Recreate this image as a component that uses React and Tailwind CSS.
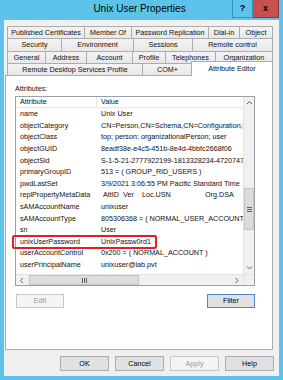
import React from "react";

const tabRows = [
  [
    ["Published Certificates", 78],
    ["Member Of", 47],
    ["Password Replication", 77],
    ["Dial-in", 31],
    ["Object", 33],
  ],
  [
    ["Security", 55],
    ["Environment", 72],
    ["Sessions", 59],
    ["Remote control", 80],
  ],
  [
    ["General", 39],
    ["Address", 41],
    ["Account", 46],
    ["Profile", 33],
    ["Telephones", 50],
    ["Organization", 57],
  ],
];

const attrs = [
  ["name", "Unix User"],
  ["objectCategory", "CN=Person,CN=Schema,CN=Configuration,DC=lab,DC=pvt"],
  ["objectClass", "top; person; organizationalPerson; user"],
  ["objectGUID", "8eadf38e-e4c5-451b-8e4d-4bbfc2668f06"],
  ["objectSid", "S-1-5-21-2777922199-1813328234-4720747100-1105"],
  ["primaryGroupID", "513 = ( GROUP_RID_USERS )"],
  ["pwdLastSet", "3/9/2021 3:06:55 PM Pacific Standard Time"],
  ["replPropertyMetaData", null],
  ["sAMAccountName", "unixuser"],
  ["sAMAccountType", "805306368 = ( NORMAL_USER_ACCOUNT )"],
  ["sn", "User"],
  ["unixUserPassword", "UnixPassw0rd1"],
  ["userAccountControl", "0x200 = ( NORMAL_ACCOUNT )"],
  ["userPrincipalName", "unixuser@lab.pvt"],
];

function Chevron({ dir }) {
  const d = {
    up: "M1 4 L3.5 1.5 L6 4",
    down: "M1 1.5 L3.5 4 L6 1.5",
    left: "M4 1 L1.5 3.5 L4 6",
    right: "M1.5 1 L4 3.5 L1.5 6",
  }[dir];
  const w = dir === "up" || dir === "down" ? 7 : 5.5;
  const h = dir === "up" || dir === "down" ? 5.5 : 7;
  return (
    <svg width={w} height={h} viewBox={`0 0 ${w} ${h}`}>
      <path d={d} fill="none" stroke="#606060" strokeWidth="1" />
    </svg>
  );
}

function Grip({ vertical }) {
  return (
    <div className={vertical ? "flex flex-col gap-[1px]" : "flex gap-[1px]"}>
      {[0, 1, 2].map((i) => (
        <div key={i} className={vertical ? "w-[5px] h-px bg-[#606060]" : "w-px h-[5px] bg-[#606060]"} />
      ))}
    </div>
  );
}

function Button({ label, disabled, isDefault, className = "" }) {
  const look = disabled
    ? "bg-[#f4f4f4] border-[#c8c8c8] text-[#9a9a9a]"
    : isDefault
    ? "bg-[#e1e1e1] border-[#4f88bd] text-black"
    : "bg-[#e1e1e1] border-[#adadad] text-black";
  return (
    <div className={`flex items-center justify-center border ${look} ${className}`}>{label}</div>
  );
}

export default function App() {
  return (
    <div
      className="w-[283px] h-[380px] bg-[#5cc4ea] flex flex-col overflow-hidden text-[7.2px] leading-none text-[#111]"
      style={{ fontFamily: '"Liberation Sans", Arial, sans-serif' }}
    >
      {/* title bar */}
      <div className="h-[20px] flex items-start">
        <div className="flex-1" />
        <div className="pt-[4px] text-[10px] text-black">Unix User Properties</div>
        <div className="flex-1 flex justify-end pr-[4px]">
          <div className="w-[21px] h-[18px] border border-t-0 border-[#3a8fb5] flex items-center justify-center text-[9px] font-bold text-black">
            ?
          </div>
          <div className="w-[26px] h-[18px] bg-[#c75050] border border-t-0 border-l-0 border-[#8c3535] flex items-center justify-center text-[9px] font-bold text-black">
            x
          </div>
        </div>
      </div>

      {/* dialog body */}
      <div className="mx-[4px] h-[356px] bg-[#f0f0f0] flex flex-col">
        {/* tabs */}
        <div className="mt-[6px] ml-[3px] w-[266px] flex flex-col">
          {tabRows.map((row, ri) => (
            <div key={ri} className="flex h-[12.25px]">
              {row.map(([label, w], ti) => (
                <div
                  key={label}
                  className={`flex items-center justify-center border-t border-r border-[#acacac] bg-gradient-to-b from-[#f3f3f3] to-[#e8e8e8] ${ti === 0 ? "border-l" : ""}`}
                  style={{ width: w }}
                >
                  {label}
                </div>
              ))}
            </div>
          ))}
          <div className="flex h-[12.25px] items-end">
            <div className="w-[136px] h-full flex items-center justify-center border-t border-l border-r border-[#acacac] bg-gradient-to-b from-[#f3f3f3] to-[#e8e8e8]">
              Remote Desktop Services Profile
            </div>
            <div className="w-[50px] h-full flex items-center justify-center border-t border-r border-[#acacac] bg-gradient-to-b from-[#f3f3f3] to-[#e8e8e8]">
              COM+
            </div>
            <div className="relative z-10 -ml-[2px] w-[82px] h-[15px] mb-[-1px] flex items-start pt-[3px] justify-center border-t border-l border-r border-[#acacac] bg-white">
              Attribute Editor
            </div>
          </div>
        </div>

        {/* tab panel */}
        <div className="relative ml-[1px] w-[268px] h-[275px] bg-white border border-[#acacac] flex flex-col">
          <div className="mt-[8px] ml-[9px] h-[9px] flex items-center">Attributes:</div>

          {/* list view */}
          <div className="mt-[3px] ml-[9px] w-[240px] h-[190px] border border-[#9aa0a8] grid grid-cols-[1fr_11px] grid-rows-[1fr_11px]">
            <div className="overflow-hidden flex flex-col">
              <div className="h-[11px] flex border-b border-[#e5e5e5] shrink-0">
                <div className="w-[81px] pl-[4px] flex items-center border-r border-[#e5e5e5]">Attribute</div>
                <div className="pl-[4px] flex items-center">Value</div>
              </div>
              {attrs.map(([k, v]) => (
                <div key={k} className="h-[11.6px] flex items-center whitespace-nowrap shrink-0">
                  <div className="w-[81px] pl-[4px] shrink-0">{k}</div>
                  {v === null ? (
                    <div className="pl-[6px] flex">
                      <span className="w-[20px]">AttID</span>
                      <span className="w-[19px]">Ver</span>
                      <span className="w-[63px]">Loc.USN</span>
                      <span>Org.DSA</span>
                    </div>
                  ) : (
                    <div className="pl-[4px]">{v}</div>
                  )}
                </div>
              ))}
            </div>

            {/* vertical scrollbar */}
            <div className="bg-[#f0f0f0] border-l border-[#e3e3e3] flex flex-col">
              <div className="h-[12px] flex items-center justify-center">
                <Chevron dir="up" />
              </div>
              <div className="flex-1">
                <div className="mt-[79px] h-[42px] bg-[#dcdcdc] border border-[#c6c6c6] flex items-center justify-center">
                  <Grip vertical />
                </div>
              </div>
              <div className="h-[12px] flex items-center justify-center">
                <Chevron dir="down" />
              </div>
            </div>

            {/* horizontal scrollbar */}
            <div className="bg-[#f0f0f0] border-t border-[#e3e3e3] flex items-stretch">
              <div className="w-[12px] flex items-center justify-center">
                <Chevron dir="left" />
              </div>
              <div className="flex-1 flex">
                <div className="ml-[1px] w-[110px] bg-[#dcdcdc] border border-[#c6c6c6] flex items-center justify-center">
                  <Grip />
                </div>
              </div>
              <div className="w-[12px] flex items-center justify-center">
                <Chevron dir="right" />
              </div>
            </div>
            <div className="bg-[#f0f0f0] border-t border-l border-[#e3e3e3]" />
          </div>

          {/* edit / filter */}
          <div className="mt-[8px] ml-[10px] w-[239px] flex justify-between">
            <Button label="Edit" disabled className="w-[48px] h-[14px]" />
            <Button label="Filter" isDefault className="w-[48px] h-[14px]" />
          </div>

          {/* highlight */}
          <div className="absolute left-[6px] top-[159px] w-[145px] h-[14px] border-2 border-[#e31e24] rounded-[2px]" />
        </div>

        {/* dialog buttons */}
        <div className="mt-[6px] flex justify-end gap-[6px] pr-[5px]">
          <Button label="OK" className="w-[49px] h-[15px]" />
          <Button label="Cancel" className="w-[49px] h-[15px]" />
          <Button label="Apply" disabled className="w-[49px] h-[15px]" />
          <Button label="Help" className="w-[49px] h-[15px]" />
        </div>
      </div>
    </div>
  );
}
